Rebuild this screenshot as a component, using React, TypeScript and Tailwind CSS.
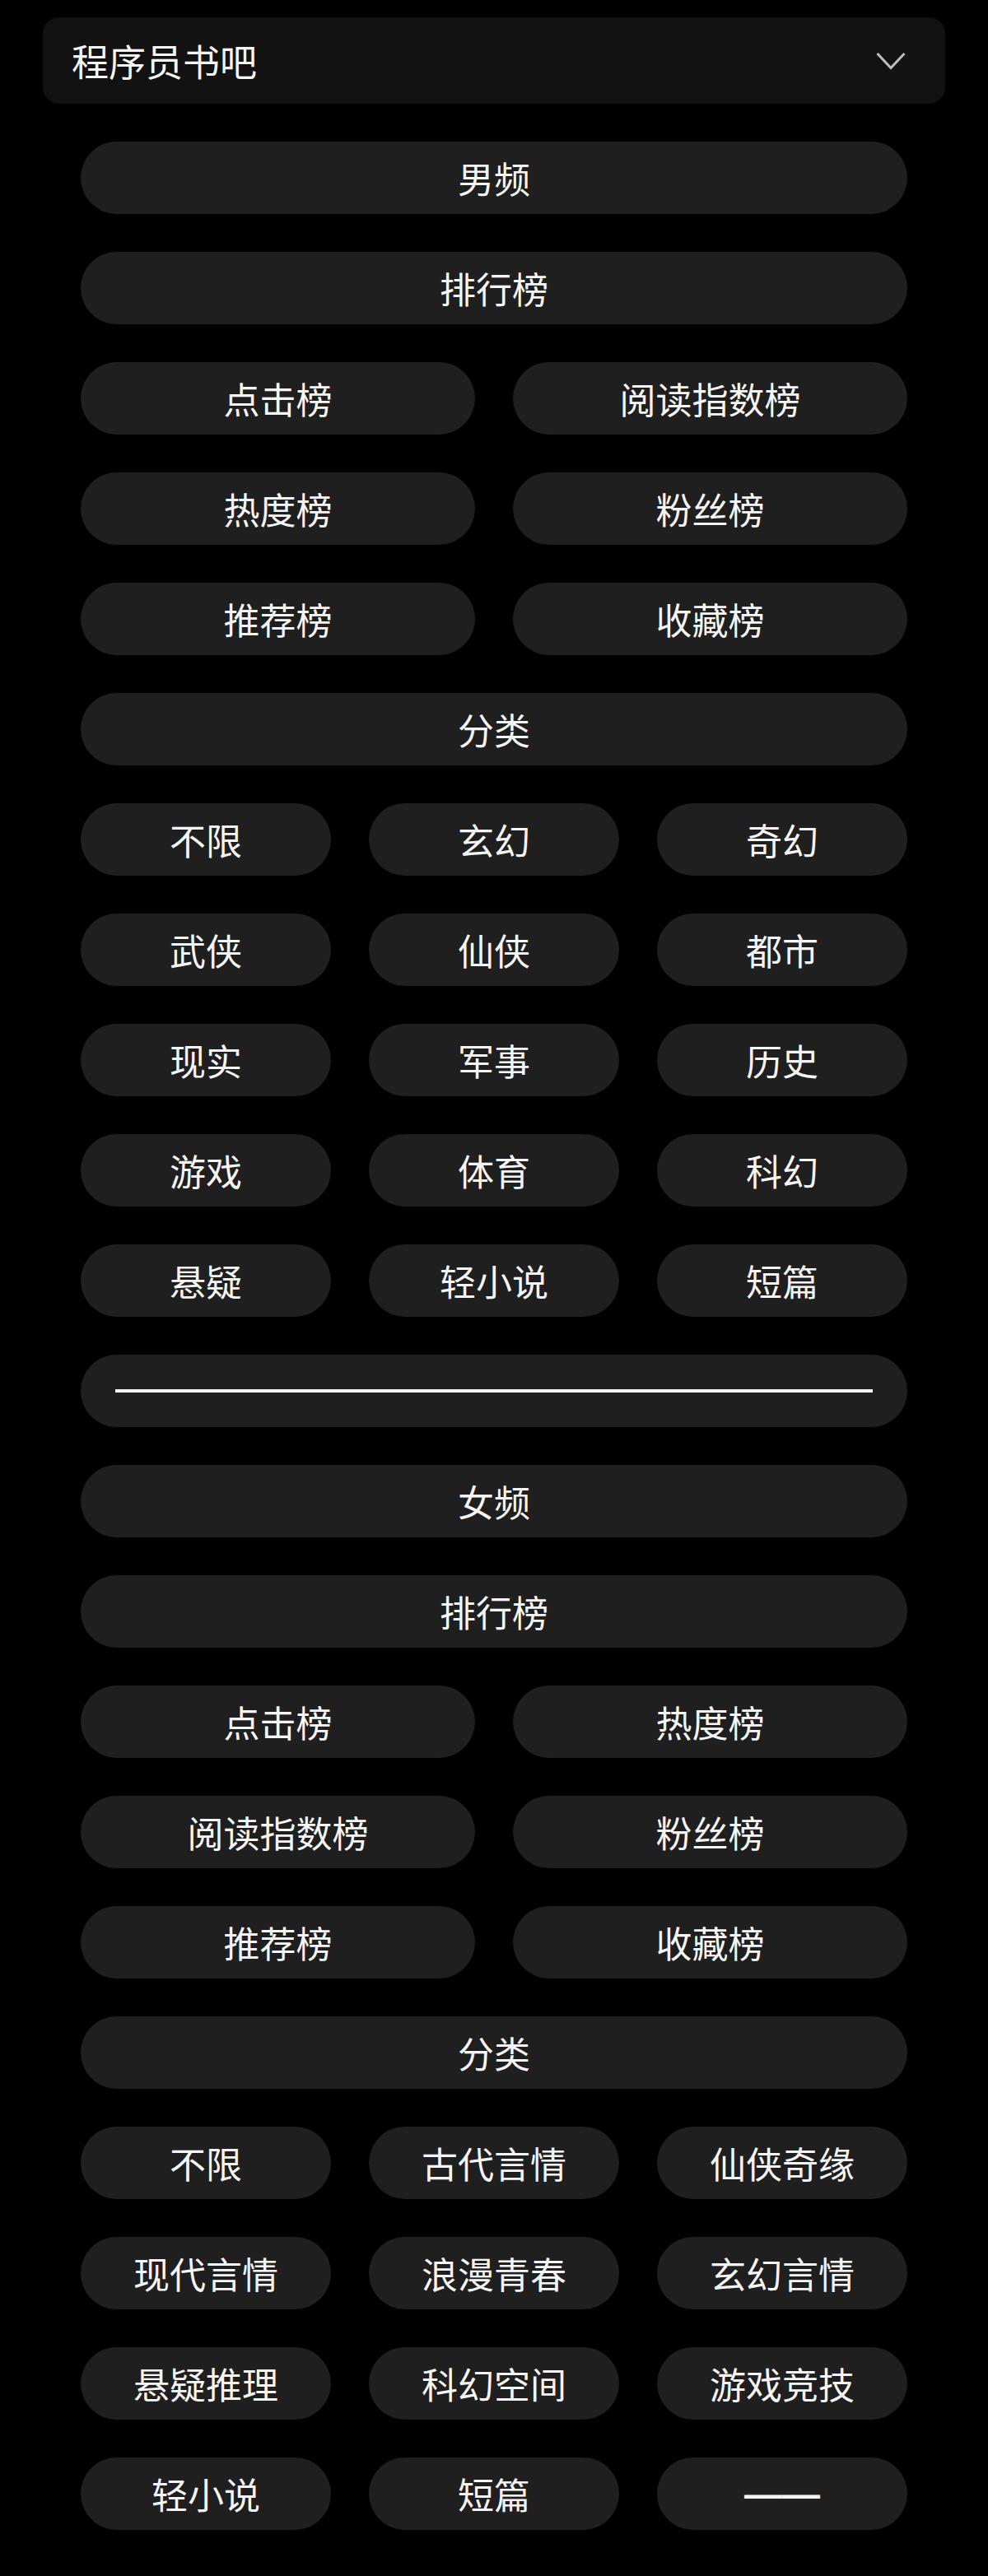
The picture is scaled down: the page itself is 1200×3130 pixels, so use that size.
import React from "react";

const Pill = ({ children }: { children?: React.ReactNode }) => (
  <div className="h-[88px] rounded-full bg-[#1f1f1f] flex items-center justify-center text-[44px] leading-none text-[#f5f5f5]">
    {children}
  </div>
);

const Full = ({ label }: { label: string }) => <Pill>{label}</Pill>;

const Grid2 = ({ items }: { items: string[] }) => (
  <div className="grid grid-cols-2 gap-[46px]">
    {items.map((t) => (
      <Pill key={t}>{t}</Pill>
    ))}
  </div>
);

const Grid3 = ({ items }: { items: React.ReactNode[] }) => (
  <div className="grid grid-cols-3 gap-[46px]">
    {items.map((t, i) => (
      <Pill key={i}>{t}</Pill>
    ))}
  </div>
);

export default function App() {
  return (
    <div
      className="w-[1200px] h-[3130px] bg-black pt-[21px]"
      style={{ fontFamily: '"Noto Sans CJK SC", "Noto Sans", sans-serif' }}
    >
      <div className="mx-[52px] h-[105px] rounded-[20px] bg-[#121212] flex items-center justify-between pl-[35px] pr-[48px]">
        <span className="text-[45px] leading-none text-[#f5f5f5]">程序员书吧</span>
        <svg width="36" height="22" viewBox="0 0 36 22" fill="none">
          <polyline points="1.5,2 18,19.5 34.5,2" stroke="#bdbdbd" strokeWidth="3" />
        </svg>
      </div>
      <div className="w-[1004px] mx-auto mt-[46px] flex flex-col gap-[46px]">
        <Full label="男频" />
        <Full label="排行榜" />
        <Grid2 items={["点击榜", "阅读指数榜", "热度榜", "粉丝榜", "推荐榜", "收藏榜"]} />
        <Full label="分类" />
        <Grid3
          items={[
            "不限", "玄幻", "奇幻",
            "武侠", "仙侠", "都市",
            "现实", "军事", "历史",
            "游戏", "体育", "科幻",
            "悬疑", "轻小说", "短篇",
          ]}
        />
        <div className="h-[88px] rounded-full bg-[#1f1f1f] flex items-center px-[42px]">
          <div className="h-[4px] w-full bg-[#f5f5f5]" />
        </div>
        <Full label="女频" />
        <Full label="排行榜" />
        <Grid2 items={["点击榜", "热度榜", "阅读指数榜", "粉丝榜", "推荐榜", "收藏榜"]} />
        <Full label="分类" />
        <Grid3
          items={[
            "不限", "古代言情", "仙侠奇缘",
            "现代言情", "浪漫青春", "玄幻言情",
            "悬疑推理", "科幻空间", "游戏竞技",
            "轻小说", "短篇",
            <span
              key="dash"
              className="text-[46px] leading-none font-bold"
              style={{ fontFamily: '"Liberation Sans", Arial, sans-serif' }}
            >
              ——
            </span>,
          ]}
        />
      </div>
    </div>
  );
}
